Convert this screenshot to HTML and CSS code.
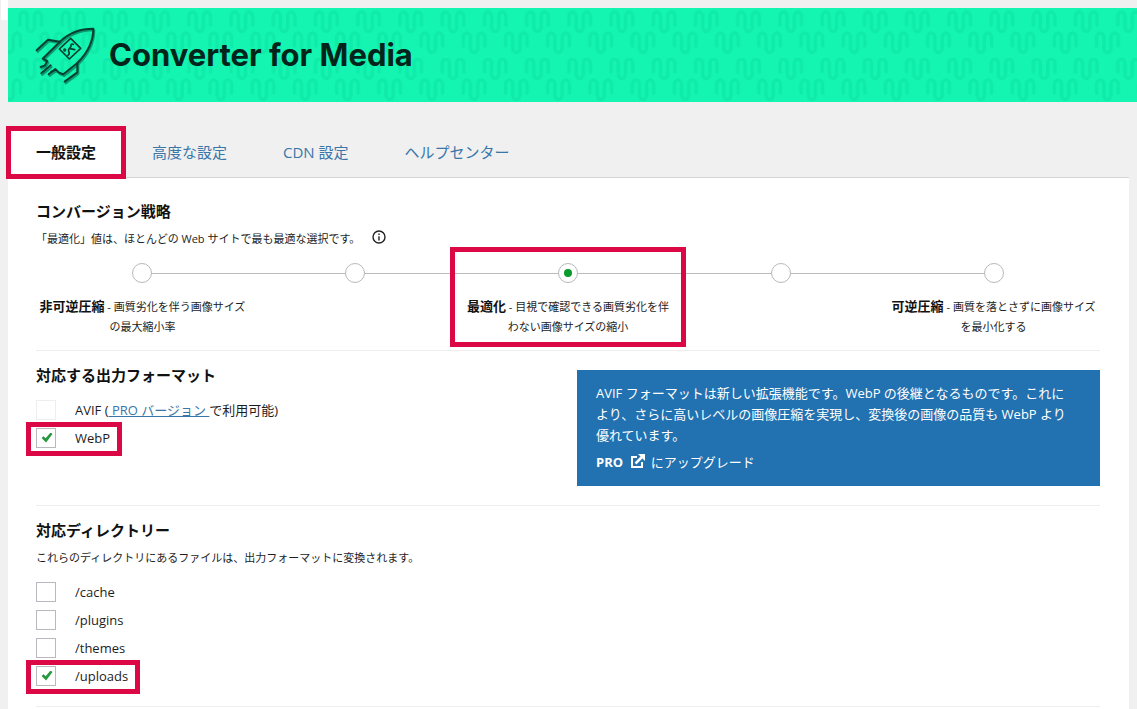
FILE: index.html
```html
<!DOCTYPE html>
<html lang="ja">
<head>
<meta charset="utf-8">
<meta name="viewport" content="width=device-width, initial-scale=1">
<title>Converter for Media</title>
<link rel="stylesheet" href="styles.css">
</head>
<body>
<header class="banner">
  <svg class="banner-pattern" aria-hidden="true">
    <defs>
      <pattern id="waves" x="10" y="2" width="42.22" height="47" patternUnits="userSpaceOnUse">
        <g fill="none" stroke="#10ebaa" stroke-width="3.5" stroke-linecap="round">
          <path d="M2 15V6.5a3.6 4.5 0 0 1 7.2 0V17a3.6 4.5 0 0 0 7.2 0V6.5a3.6 4.5 0 0 1 7.2 0V15"/>
          <path transform="translate(21.11 21)" d="M2 15V6.5a3.6 4.5 0 0 1 7.2 0V17a3.6 4.5 0 0 0 7.2 0V6.5a3.6 4.5 0 0 1 7.2 0V15"/>
          <path transform="translate(-21.11 21)" d="M2 15V6.5a3.6 4.5 0 0 1 7.2 0V17a3.6 4.5 0 0 0 7.2 0V6.5a3.6 4.5 0 0 1 7.2 0V15"/>
        </g>
      </pattern>
    </defs>
    <rect width="100%" height="100%" fill="url(#waves)"/>
  </svg>
  <svg class="logo" viewBox="102 72 186 180" fill="none" stroke-linejoin="round" stroke-linecap="round" aria-hidden="true">
    <g stroke="#0a9b70" stroke-width="6" transform="translate(3 5)">
      <path d="M180 122C208 94 244 83 280 83C280 124 262 156 232 186L190 220L176 214L168 206L154 212"/>
      <path d="M180 122L128 173L142 180L134 194L122 198"/>
      <path d="M110 148L144 116L180 122M232 186V214L194 242M152 193L124 217M166 204L146 220"/>
    </g>
    <g stroke="#053f30" stroke-width="6">
      <path d="M180 122C208 94 244 83 280 83C280 124 262 156 232 186L190 220L176 214L168 206L154 212"/>
      <path d="M180 122L128 173L142 180L134 194L122 198"/>
      <path d="M110 148L144 116L180 122M232 186V214L194 242M152 193L124 217M166 204L146 220"/>
      <path stroke-width="5" d="M212 112L242 142L208 174L178 144Z"/>
      <path stroke-width="5" d="M204 163C208 160 209 156 206 150C203 143 210 142 213 136C211 129 217 128 220 130M210 143L224 146"/>
      <circle cx="194" cy="147" r="3" stroke-width="4"/>
    </g>
  </svg>
  <h1 class="banner-title">Converter for Media</h1>
</header>

<nav class="tabs">
  <a class="tab tab-active marked" href="#general">一般設定</a>
  <a class="tab" href="#advanced">高度な設定</a>
  <a class="tab" href="#cdn">CDN 設定</a>
  <a class="tab" href="#help">ヘルプセンター</a>
</nav>

<main class="panel" id="general">
  <section class="section">
    <h2 class="heading">コンバージョン戦略</h2>
    <p class="description">「最適化」値は、ほとんどの Web サイトで最も最適な選択です。
      <svg class="info" viewBox="0 0 14 14" fill="none" stroke="#222" stroke-width="1.4" aria-hidden="true"><circle cx="7" cy="7" r="6"/><path d="M7 6.2v4.3M7 3.5v1.5"/></svg>
    </p>
    <div class="levels" role="radiogroup" aria-label="コンバージョン戦略">
      <label class="level"><input class="radio" type="radio" name="level"><span><b>非可逆圧縮</b> - 画質劣化を伴う画像サイズの最大縮小率</span></label>
      <label class="level"><input class="radio" type="radio" name="level" aria-label="2"></label>
      <label class="level marked"><input class="radio" type="radio" name="level" checked><span><b>最適化</b> - 目視で確認できる画質劣化を伴わない画像サイズの縮小</span></label>
      <label class="level"><input class="radio" type="radio" name="level" aria-label="4"></label>
      <label class="level"><input class="radio" type="radio" name="level"><span><b>可逆圧縮</b> - 画質を落とさずに画像サイズを最小化する</span></label>
    </div>
  </section>

  <section class="section split">
    <div>
      <h2 class="heading">対応する出力フォーマット</h2>
      <div class="options">
        <div class="option"><input class="check" type="checkbox" id="avif" disabled><label for="avif">AVIF (<a class="link" href="#pro">&nbsp;PRO バージョン&nbsp;</a>で利用可能)</label></div>
        <div class="option marked"><input class="check" type="checkbox" id="webp" checked><label for="webp">WebP</label></div>
      </div>
    </div>
    <aside class="notice">
      <p>AVIF フォーマットは新しい拡張機能です。WebP の後継となるものです。これにより、さらに高いレベルの画像圧縮を実現し、変換後の画像の品質も WebP より優れています。</p>
      <p><a class="upgrade" href="#pro">PRO <svg class="external" viewBox="0 0 14 14" fill="none" stroke="#fff" stroke-width="2" aria-hidden="true"><path d="M6 3H1v10h10V8"/><path stroke-width="2.5" d="M4.5 9.5L11 3"/><path fill="#fff" stroke="none" d="M7 0h7v7z"/></svg></a> にアップグレード</p>
    </aside>
  </section>

  <section class="section">
    <h2 class="heading">対応ディレクトリー</h2>
    <p class="description">これらのディレクトリにあるファイルは、出力フォーマットに変換されます。</p>
    <div class="options">
      <div class="option"><input class="check" type="checkbox" id="cache"><label for="cache">/cache</label></div>
      <div class="option"><input class="check" type="checkbox" id="plugins"><label for="plugins">/plugins</label></div>
      <div class="option"><input class="check" type="checkbox" id="themes"><label for="themes">/themes</label></div>
      <div class="option marked"><input class="check" type="checkbox" id="uploads" checked><label for="uploads">/uploads</label></div>
    </div>
  </section>
</main>
</body>
</html>
```

FILE: styles.css
```css
* {
  box-sizing: border-box;
}

html {
  height: 100%;
  overflow: hidden;
}

body {
  display: flex;
  flex-direction: column;
  min-height: 100%;
  margin: 0;
  padding: 8px 0 0 8px;
  background: #f0f0f1;
  color: #1d1d1d;
  font: 13px/20px "Open Sans", "Noto Sans CJK JP", sans-serif;
}

body::before {
  content: "";
  position: absolute;
  top: 0;
  left: 1px;
  width: 7px;
  height: 20px;
  background: #fff;
}

h1, h2, p {
  margin: 0;
}

.banner {
  position: relative;
  display: flex;
  align-items: center;
  gap: 13px;
  height: 94px;
  padding-left: 26px;
  background: #13f5b1;
}

.banner-pattern {
  position: absolute;
  inset: 0;
  width: 100%;
  height: 100%;
}

.logo {
  position: relative;
  width: 62px;
  height: 60px;
}

.banner-title {
  position: relative;
  color: #03241b;
  font: bold 31px/36px Inter, sans-serif;
}

.tabs {
  display: flex;
  margin: 26px 8px 0 0;
  border-bottom: 1px solid #d5d5d7;
}

.tab {
  padding: 0 28px;
  color: #3a76a8;
  font-size: 15px;
  line-height: 49px;
  text-decoration: none;
}

.tab-active {
  background: #fff;
  color: #111;
  font-weight: bold;
}

/* Red frame around the recommended settings */
.marked {
  position: relative;
}

.marked::after {
  content: "";
  position: absolute;
  inset: -6px -12px -8px -10px;
  border: 5px solid #dc0745;
  pointer-events: none;
}

.tab.marked::after {
  inset: -2px;
}

.level.marked::after {
  inset: -16px -12px -10px;
}

.panel {
  flex: 1;
  margin-right: 8px;
  padding: 9px 29px 0 28px;
  background: #fff;
}

.section {
  padding: 13px 0;
  border-bottom: 1px solid #eee;
}

.heading {
  margin-bottom: 7px;
  color: #111;
  font-size: 15px;
  line-height: 22px;
}

.description {
  display: flex;
  align-items: center;
  gap: 12px;
  font-size: 11px;
}

.info {
  width: 14px;
  height: 14px;
  margin-bottom: 4px;
}

.levels {
  position: relative;
  display: grid;
  grid-template-columns: repeat(5, 1fr);
  margin-top: 14px;
}

.levels::before {
  content: "";
  position: absolute;
  top: 10px;
  left: 10%;
  right: 10%;
  border-top: 1px solid #bbb;
}

.level {
  display: flex;
  flex-direction: column;
  align-items: center;
  gap: 13px;
  font-size: 11px;
  text-align: center;
}

.level b {
  color: #111;
  font-size: 13px;
}

.radio, .check {
  appearance: none;
  position: relative;
  display: grid;
  place-items: center;
  flex: none;
  width: 20px;
  height: 20px;
  margin: 0;
  border: 1px solid #b8b8be;
  background: #fff;
}

.radio {
  border-radius: 50%;
}

.radio:checked::before {
  content: "";
  width: 8px;
  height: 8px;
  border-radius: 50%;
  background: #0a9b2d;
}

.check:checked::before {
  content: "";
  width: 11px;
  height: 10px;
  margin: 0 0 1px 2px;
  background: #26983e;
  clip-path: polygon(0 54%, 18% 38%, 38% 58%, 82% 0, 100% 14%, 42% 100%);
}

.check:disabled {
  border-color: #eee;
}

.split {
  display: grid;
  grid-template-columns: 1fr 1fr;
  gap: 18px;
}

.options {
  display: flex;
  flex-direction: column;
  align-items: flex-start;
  gap: 8px;
  margin: 14px 0 7px;
}

.option {
  display: flex;
  align-items: center;
  gap: 19px;
}

.link {
  color: #3a76a8;
}

.notice {
  display: flex;
  flex-direction: column;
  gap: 6px;
  margin: 6px 0;
  padding: 13px 29px 13px 19px;
  background: #2271b1;
  color: #fff;
  line-height: 21px;
}

.upgrade {
  color: #fff;
  font-weight: bold;
  text-decoration: none;
}

.external {
  width: 14px;
  height: 14px;
  margin: 0 2px 0 5px;
  vertical-align: -1px;
}
```
